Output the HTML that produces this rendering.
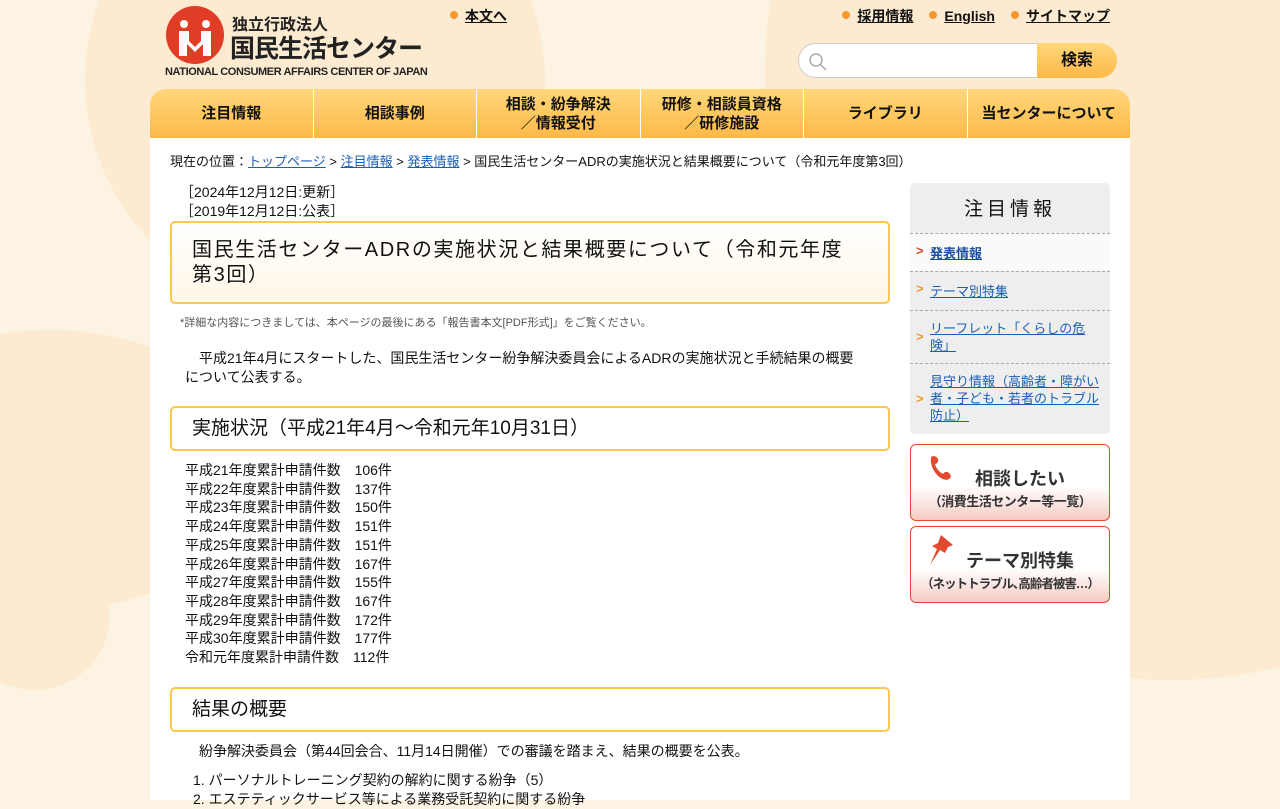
<!DOCTYPE html>
<html><head><meta charset="utf-8">
<style>
*{margin:0;padding:0;box-sizing:border-box}
body{width:1280px;height:800px;overflow:hidden;background:#fdf3e3;font-family:"Liberation Sans","Noto Sans CJK JP",sans-serif;color:#111;position:relative}
.c{position:absolute;border-radius:50%;background:#fdebd1}
a{color:#1a5fb4}
.hdr{position:absolute;left:150px;top:0;width:980px;height:90px}
.top a{color:#111;font-weight:bold;font-size:14px}
.dot{display:inline-block;width:8px;height:8px;border-radius:50%;background:#f7982c;margin-right:7px;vertical-align:2px}
nav{position:absolute;left:150px;top:89px;width:980px;height:49px;display:flex;border-radius:16px 16px 0 0;overflow:hidden}
nav div{flex:1;background:linear-gradient(#ffd77a,#fdb948);border-right:1px solid #fff;display:flex;align-items:center;justify-content:center;text-align:center;font-weight:bold;font-size:15px;line-height:19px}
nav div:last-child{border-right:none}
.main{position:absolute;left:150px;top:138px;width:980px;height:662px;background:#fff}
.box{border:2px solid #fcc84f;border-radius:5px;padding:0 20px}
.sb{position:absolute;left:760px;top:45px;width:200px}
.btn{border:1px solid #e04a2e;border-radius:6px;height:77px;background:linear-gradient(#fff 55%,#f6cbc4);margin-top:10px;position:relative;text-align:center;font-weight:bold;color:#333}
</style></head><body>
<div class="c" style="left:85px;top:-150px;width:460px;height:460px"></div>
<div class="c" style="left:-160px;top:330px;width:420px;height:280px"></div>
<div class="c" style="left:-40px;top:540px;width:150px;height:150px"></div>
<div class="c" style="left:765px;top:-380px;width:900px;height:900px"></div>
<div class="c" style="left:920px;top:420px;width:500px;height:260px"></div>
<div class="hdr">
 <svg style="position:absolute;left:16px;top:6px" width="58" height="58"><circle cx="29" cy="29" r="29" fill="#e03c26"/><path d="M14 18 a4 4 0 1 1 8 0 a4 4 0 1 1 -8 0 M36 18 a4 4 0 1 1 8 0 a4 4 0 1 1 -8 0 M13 25h10v10l6 6 6-6V25h10v25h-8V38l-8 8-8-8v12h-8z" fill="#fff"/></svg>
 <div style="position:absolute;left:82px;top:11px;font-size:16px;font-weight:bold;color:#222">独立行政法人</div>
 <div style="position:absolute;left:80px;top:29px;font-size:25px;font-weight:bold;color:#222;letter-spacing:-1px">国民生活センター</div>
 <div style="position:absolute;left:15px;top:66px;font-size:11px;font-weight:bold;color:#222;letter-spacing:-.4px;width:270px;white-space:nowrap">NATIONAL CONSUMER AFFAIRS CENTER OF JAPAN</div>
 <div class="top" style="position:absolute;left:300px;top:6px"><span class="dot"></span><a href="#">本文へ</a></div>
 <div class="top" style="position:absolute;right:20px;top:6px;line-height:20px"><span class="dot"></span><a href="#">採用情報</a>　<span class="dot"></span><a href="#">English</a>　<span class="dot"></span><a href="#">サイトマップ</a></div>
 <div style="position:absolute;left:648px;top:43px;width:240px;height:35px;background:#fff;border:1px solid #ccc;border-radius:18px 0 0 18px"><svg style="position:absolute;left:9px;top:8px" width="20" height="20"><circle cx="8" cy="8" r="6" fill="none" stroke="#aaa" stroke-width="1.5"/><path d="M12 12l6 6" stroke="#aaa" stroke-width="1.5"/></svg></div>
 <div style="position:absolute;left:887px;top:43px;width:80px;height:35px;background:linear-gradient(#ffd77a,#fdb948);border-radius:0 18px 18px 0;text-align:center;line-height:35px;font-weight:bold;font-size:16px">検索</div>
</div>
<nav><div>注目情報</div><div>相談事例</div><div>相談・紛争解決<br>／情報受付</div><div>研修・相談員資格<br>／研修施設</div><div>ライブラリ</div><div>当センターについて</div></nav>
<div class="main">
 <div style="position:absolute;left:20px;top:13px;font-size:13px">現在の位置：<a href="#">トップページ</a> &gt; <a href="#">注目情報</a> &gt; <a href="#">発表情報</a> &gt; 国民生活センターADRの実施状況と結果概要について（令和元年度第3回）</div>
 <div style="position:absolute;left:20px;top:45px;width:720px;font-size:14px">
  <div style="padding-left:10px;line-height:19px">［2024年12月12日:更新］<br>［2019年12月12日:公表］</div>
  <div class="box" style="background:linear-gradient(#fff,#fff6e6);padding:15px 20px 14px;font-size:20px;line-height:25px;letter-spacing:1.6px;margin-top:0">国民生活センターADRの実施状況と結果概要について（令和元年度<br>第3回）</div>
  <div style="font-size:11px;color:#555;padding:10px 0 0 10px">*詳細な内容につきましては、本ページの最後にある「報告書本文[PDF形式]」をご覧ください。</div>
  <div style="padding:19px 0 0 15px;line-height:19px">　平成21年4月にスタートした、国民生活センター紛争解決委員会によるADRの実施状況と手続結果の概要<br>について公表する。</div>
  <div class="box" style="margin-top:19px;height:45px;line-height:41px;font-size:19px">実施状況（平成21年4月～令和元年10月31日）</div>
  <div style="padding:10px 0 0 15px;line-height:18.7px">平成21年度累計申請件数　106件<br>平成22年度累計申請件数　137件<br>平成23年度累計申請件数　150件<br>平成24年度累計申請件数　151件<br>平成25年度累計申請件数　151件<br>平成26年度累計申請件数　167件<br>平成27年度累計申請件数　155件<br>平成28年度累計申請件数　167件<br>平成29年度累計申請件数　172件<br>平成30年度累計申請件数　177件<br>令和元年度累計申請件数　112件</div>
  <div class="box" style="margin-top:20px;height:45px;line-height:41px;font-size:19px">結果の概要</div>
  <div style="padding:10px 0 0 15px;line-height:19px">　紛争解決委員会（第44回会合、11月14日開催）での審議を踏まえ、結果の概要を公表。</div>
  <div style="padding:10px 0 0 23px;line-height:19px">1. パーソナルトレーニング契約の解約に関する紛争（5）<br>2. エステティックサービス等による業務受託契約に関する紛争</div>
 </div>
 <div class="sb">
  <div style="background:#eee;border-radius:5px;overflow:hidden">
   <div style="height:50px;line-height:54px;text-align:center;font-size:19px;letter-spacing:4px">注目情報</div>
   <div style="border-top:1px dashed #aaa;background:#fafafa;padding:9px 0 9px 20px;font-size:13px;position:relative"><span style="position:absolute;left:6px;color:#e04a2e;font-weight:bold">&gt;</span><a href="#" style="font-weight:bold;color:#1a4fa0">発表情報</a></div>
   <div style="border-top:1px dashed #aaa;padding:9px 0 10px 20px;font-size:13px;position:relative"><span style="position:absolute;left:6px;color:#f7982c;font-weight:bold">&gt;</span><a href="#">テーマ別特集</a></div>
   <div style="border-top:1px dashed #aaa;padding:9px 6px 9px 20px;font-size:13px;line-height:17px;position:relative"><span style="position:absolute;left:6px;top:17px;color:#f7982c;font-weight:bold">&gt;</span><a href="#">リーフレット「くらしの危険」</a></div>
   <div style="border-top:1px dashed #aaa;padding:9px 6px 10px 20px;font-size:13px;line-height:17px;position:relative"><span style="position:absolute;left:6px;top:26px;color:#f7982c;font-weight:bold">&gt;</span><a href="#">見守り情報（高齢者・障がい者・子ども・若者のトラブル防止）</a></div>
  </div>
  <div class="btn"><svg style="position:absolute;left:15px;top:9px" width="30" height="30"><path d="M5 3c3-2 6 0 7 2s-1 5-3 5c1 4 4 8 8 10 1-2 4-3 6-1s3 4 0 6c-6 4-20-8-18-22z" fill="#e04a2e"/></svg><div style="padding:20px 0 0 20px;font-size:18px">相談したい</div><div style="font-size:13px;letter-spacing:-.5px">（消費生活センター等一覧）</div></div>
  <div class="btn" style="margin-top:5px"><svg style="position:absolute;left:16px;top:6px" width="30" height="34"><path d="M14 2l12 10-5 2-3 6-5-3-10 15 7-16-5-3 6-3z" fill="#e04a2e"/></svg><div style="padding:20px 0 0 20px;font-size:18px">テーマ別特集</div><div style="font-size:12.5px;letter-spacing:-1px;white-space:nowrap">（ネットトラブル､高齢者被害…）</div></div>
 </div>
</div>
</body></html>
